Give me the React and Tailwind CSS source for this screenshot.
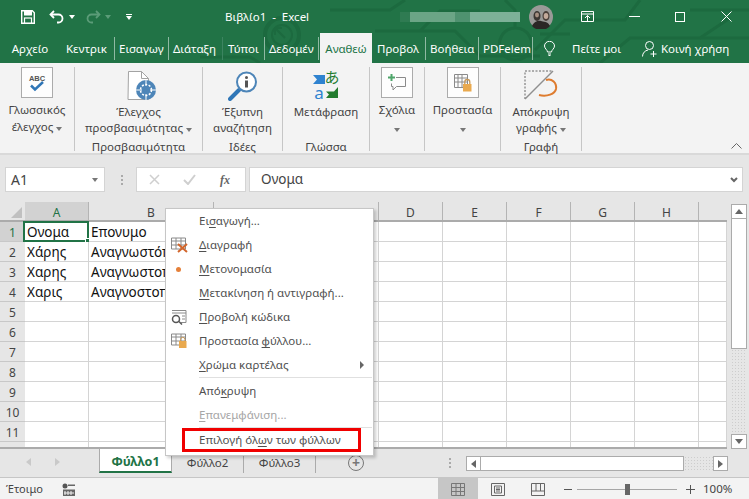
import React from 'react';

// underlined access key in the menu labels
const U = ({ children }) => <span className="underline underline-offset-2 decoration-1">{children}</span>;

const Caret = ({ className = 'border-t-[#777]' }) => (
  <span className={`inline-block w-0 h-0 border-x-[3.5px] border-x-transparent border-t-[4px] ${className}`} />
);

// title bar + tabs background
const CircuitBg = () => (
  <svg className="absolute inset-0" width="749" height="63" viewBox="0 0 749 63" fill="none" stroke="#1c6a3f" strokeWidth="3">
    <circle cx="282" cy="35" r="17" strokeWidth="4" />
    <circle cx="282" cy="35" r="10" strokeWidth="2" />
    <path d="M275 28l10 10M275 28h7M275 28v7" strokeWidth="2" />
    <path d="M330 10h60l15 -10M200 57h50l10 6" />
    <path d="M375 31h80l25 25h60M420 31l20 -20h40" />
    <path d="M505 0l10 10v18a16 16 0 1 0 1 0" />
    <path d="M535 50l30 -30h60l15 -20M600 63l30 -25h70l30 -20" />
    <path d="M540 34h30M690 10h59M700 38h49" />
  </svg>
);

const TitleBar = () => (
  <div className="relative z-10 flex items-center h-[33px] text-white">
    {/* save */}
    <svg className="ml-[21px]" width="14" height="14" viewBox="0 0 14 14">
      <path d="M0.7 0.7h10.6l2 2v10.6H0.7z" fill="none" stroke="#fff" strokeWidth="1.4" />
      <rect x="3" y="1" width="8" height="4.5" fill="#fff" />
      <rect x="3.5" y="8" width="7" height="5.5" fill="none" stroke="#fff" strokeWidth="1.2" />
    </svg>
    {/* undo */}
    <svg className="ml-[14px]" width="16" height="14" viewBox="0 0 16 14" fill="none" stroke="#fff" strokeWidth="1.8">
      <path d="M5 1L1.5 4.5 5 8" />
      <path d="M2 4.5h7.5a4 4 0 0 1 4 4v0a4 4 0 0 1 -4 4H8" />
    </svg>
    <Caret className="ml-[4px] border-t-white" />
    {/* redo */}
    <svg className="ml-[10px]" width="16" height="14" viewBox="0 0 16 14" fill="none" stroke="#5b9c78" strokeWidth="1.8">
      <path d="M11 1l3.5 3.5L11 8" />
      <path d="M14 4.5H6.5a4 4 0 0 0 -4 4v0a4 4 0 0 0 4 4H8" />
    </svg>
    <Caret className="ml-[4px] border-t-[#5b9c78]" />
    <div className="ml-[15px] flex flex-col items-center gap-[1px]">
      <span className="w-[6px] h-[1px] bg-white" />
      <Caret className="border-t-white" />
    </div>
    <span className="ml-[93px] w-[82px] shrink-0 text-[11.5px] whitespace-pre">Βιβλίο1  -  Excel</span>
    {/* blurred account name */}
    <div className="ml-[93px] w-[120px] h-[10px] flex shrink-0">
      <div className="w-[10px] bg-[#2f7b52]" />
      <div className="w-[45px] bg-[#6ba586]" />
      <div className="w-[15px] bg-[#4f9270]" />
      <div className="w-[50px] bg-[#7db198]" />
    </div>
    {/* avatar */}
    <svg className="ml-[9px]" width="24" height="24" viewBox="0 0 24 24">
      <circle cx="12" cy="12" r="12" fill="#9a9a98" />
      <ellipse cx="8" cy="11" rx="3.5" ry="5" fill="#3b3532" />
      <ellipse cx="17" cy="11" rx="3.5" ry="5" fill="#4a403a" />
      <ellipse cx="17" cy="11" rx="2.3" ry="3" fill="#c3aa9b" />
      <ellipse cx="8" cy="10" rx="2" ry="2.4" fill="#a68f82" />
      <path d="M3 21c2-5 7-6 9-5s7 0 9 5a12 12 0 0 1-18 0z" fill="#2b2726" />
    </svg>
    {/* ribbon display */}
    <svg className="ml-[28px]" width="13" height="11" viewBox="0 0 13 11" fill="none" stroke="#fff">
      <path d="M0.5 0.5h12v10h-12zM0.5 3h12M4 7l2.5-2.5L9 7M6.5 4.5V10" />
    </svg>
    <span className="ml-[35px] w-[11px] h-[1px] bg-white" />
    <span className="ml-[35px] w-[10px] h-[10px] border border-white" />
    <svg className="ml-[36px]" width="11" height="11" viewBox="0 0 11 11" stroke="#fff">
      <path d="M0.5 0.5l10 10M10.5 0.5l-10 10" />
    </svg>
  </div>
);

const TabStrip = () => (
  <div className="relative z-10 flex items-center h-[30px] pt-px text-[11.5px]">
    <div className="w-[60px] text-white text-center">Αρχείο</div>
    <div className="ml-[6px] w-[45px] whitespace-nowrap text-white">Κεντρικ</div>
    <span className="ml-[3px] w-px h-[23px] bg-[#8fb9a3]" />
    <div className="ml-[4px] w-[46px] whitespace-nowrap text-white">Εισαγωγ</div>
    <span className="ml-[3px] w-px h-[23px] bg-[#8fb9a3]" />
    <div className="ml-[4px] w-[45px] whitespace-nowrap text-white">Διάταξη</div>
    <span className="ml-[4px] w-px h-[23px] bg-[#3c8460]" />
    <div className="ml-[5px] w-[32px] whitespace-nowrap text-white">Τύποι</div>
    <span className="ml-[4px] w-px h-[23px] bg-[#8fb9a3]" />
    <div className="ml-[4px] w-[46px] whitespace-nowrap text-white">Δεδομέν</div>
    <span className="ml-[3px] w-px h-[23px] bg-[#8fb9a3]" />
    <div className="ml-[1px] -mt-px self-start w-[52px] h-[30px] bg-[#f3f3f3] text-[#217346] flex items-center justify-center pt-px whitespace-nowrap">Αναθεώ</div>
    <div className="ml-[5px] w-[44px] whitespace-nowrap text-white">Προβολ</div>
    <span className="ml-[4px] w-px h-[23px] bg-[#8fb9a3]" />
    <div className="ml-[4px] w-[44px] whitespace-nowrap text-white">Βοήθεια</div>
    <span className="ml-[4px] w-px h-[23px] bg-[#8fb9a3]" />
    <div className="ml-[4px] w-[45px] whitespace-nowrap text-white">PDFelem</div>
    <span className="ml-[4px] w-px h-[23px] bg-[#8fb9a3]" />
    <svg className="ml-[11px]" width="11" height="15" viewBox="0 0 11 15" fill="none" stroke="#fff">
      <path d="M3.5 11c0-2-3-3.5-3-6a5 4.7 0 0 1 10 0c0 2.5-3 4-3 6zM4 13h3M4.5 14.5h2" />
    </svg>
    <div className="ml-[17px] w-[50px] whitespace-nowrap text-white">Πείτε μοι</div>
    <svg className="ml-[20px]" width="16" height="16" viewBox="0 0 16 16" fill="none" stroke="#fff">
      <circle cx="7.5" cy="4.5" r="4" />
      <path d="M0.5 15.5c0-3.5 2.5-6 5.5-6.5M11.5 10v6M8.5 13h6" />
    </svg>
    <div className="ml-[3px] whitespace-nowrap text-white">Κοινή χρήση</div>
  </div>
);

const Group = ({ w, label, children }) => (
  <div className={`${w} relative h-[84px] mt-[4px] border-r border-[#c6c6c6] flex flex-col items-center shrink-0`}>
    {children}
    {label && <div className="absolute left-0 right-0 top-[72px] text-center text-[11.5px] leading-[16px] text-[#444] whitespace-nowrap">{label}</div>}
  </div>
);

const IconBox = ({ children }) => (
  <div className="w-[32px] h-[31px] bg-[#fdfdfd] border border-[#ababab] flex items-center justify-center">{children}</div>
);

const Label = ({ children, mt = '' }) => (
  <div className={`${mt} text-[11.5px] leading-[16px] text-[#444] text-center whitespace-nowrap`}>{children}</div>
);

const Ribbon = () => (
  <div className="h-[92px] bg-[#f3f3f3] border-b-2 border-[#d9d9d9] flex">
    <Group w="w-[75px]">
      <IconBox>
        <svg width="22" height="22" viewBox="0 0 22 22">
          <text x="11" y="9" textAnchor="middle" fontSize="7.5" fontWeight="700" fill="#555" fontFamily="Liberation Sans">ABC</text>
          <path d="M5 13.5l4 4 8-7.5" fill="none" stroke="#2f76b7" strokeWidth="2.5" />
        </svg>
      </IconBox>
      <Label mt="mt-[4px]">Γλωσσικός</Label>
      <Label mt="mt-[1px]">έλεγχος <Caret /></Label>
    </Group>
    <Group w="w-[128px]" label="Προσβασιμότητα">
      <svg className="mt-[4px] ml-[6px]" width="30" height="30" viewBox="0 0 30 30">
        <path d="M1.5 0.5h13l7 7v21h-20.5z" fill="#fff" stroke="#a3a3a3" />
        <path d="M14.5 0.5v7h7" fill="none" stroke="#a3a3a3" />
        <circle cx="19" cy="19" r="10" fill="#4d85b8" />
        <circle cx="19" cy="19" r="5.5" fill="none" stroke="#fff" strokeWidth="1.5" strokeDasharray="2 1.5" />
        <path d="M19 9v6M19 23v6M9 19h6M23 19h6" stroke="#fff" />
      </svg>
      <Label mt="mt-[3px]">Έλεγχος</Label>
      <Label>προσβασιμότητας <Caret /></Label>
    </Group>
    <Group w="w-[80px]" label="Ιδέες">
      <svg className="mt-[4px]" width="30" height="30" viewBox="0 0 30 30">
        <path d="M11 19L2 28" stroke="#2f76b7" strokeWidth="4" strokeLinecap="round" />
        <circle cx="18.5" cy="11" r="9.5" fill="#fff" stroke="#4d85b8" strokeWidth="2" />
        <circle cx="18.5" cy="6.5" r="1.5" fill="#555" />
        <rect x="17" y="9.5" width="3" height="7" fill="#555" />
      </svg>
      <Label mt="mt-[3px]">Έξυπνη</Label>
      <Label>αναζήτηση</Label>
    </Group>
    <Group w="w-[87px]" label="Γλώσσα">
      <svg className="mt-[3px]" width="29" height="30" viewBox="0 0 29 30">
        <path d="M1 5h12v9H1l4-4.5z" fill="#2f83d0" />
        <text x="20" y="13" textAnchor="middle" fontSize="15" fill="#237c2f" fontFamily="Noto Sans CJK JP">あ</text>
        <text x="7" y="29" textAnchor="middle" fontSize="17" fill="#2f83d0" fontFamily="Noto Sans">a</text>
        <path d="M14 28h12V17l-4 4.5h-8l3 3z" fill="#237c2f" />
      </svg>
      <Label mt="mt-[4px]">Μετάφραση</Label>
    </Group>
    <Group w="w-[55px]">
      <IconBox>
        <svg width="20" height="20" viewBox="0 0 20 20" fill="none">
          <path d="M9 4.5h9.5v9h-9l-3.5 3.5v-3.5h-1.5v-3" stroke="#8a8a8a" />
          <path d="M4.5 1v7M1 4.5h7" stroke="#4ea56a" strokeWidth="2" />
        </svg>
      </IconBox>
      <Label mt="mt-[4px]">Σχόλια</Label>
      <div className="mt-[2px] leading-[12px]"><Caret /></div>
    </Group>
    <Group w="w-[76px]">
      <IconBox>
        <svg width="20" height="20" viewBox="0 0 20 20" fill="none">
          <path d="M1.5 1.5h13v13h-13zM1.5 5h13M1.5 9h13M5 1.5v13M9 1.5v13" stroke="#8a8a8a" />
          <rect x="10" y="11" width="8.5" height="7.5" fill="#e9a94e" />
          <path d="M11.8 11V9a2.5 2.5 0 0 1 5 0v2" stroke="#c79a5a" strokeWidth="1.3" />
        </svg>
      </IconBox>
      <Label mt="mt-[4px]">Προστασία</Label>
      <div className="mt-[2px] leading-[12px]"><Caret /></div>
    </Group>
    <Group w="w-[81px]" label="Γραφή">
      <svg className="mt-[3px]" width="34" height="30" viewBox="0 0 34 30" fill="none">
        <path d="M1 29V1h27" stroke="#666" strokeDasharray="2 1.5" />
        <path d="M1 29L29 1" stroke="#8f8f8f" strokeWidth="1.5" />
        <path d="M22 10c6-2 11 3 10 9-1 5-9 8-17 6" stroke="#de7c2f" strokeWidth="2" />
      </svg>
      <Label mt="mt-[4px]">Απόκρυψη</Label>
      <Label>γραφής <Caret /></Label>
    </Group>
    <div className="flex-1 flex justify-end items-end pr-[7px] pb-[4px]">
      <svg width="11" height="6" viewBox="0 0 11 6" fill="none" stroke="#666"><path d="M0.5 5.5l5-5 5 5" /></svg>
    </div>
  </div>
);

const FormulaBar = () => (
  <div className="h-[47px] flex items-start bg-[#e6e6e6] pt-[12px]">
    <div className="ml-[5px] w-[100px] h-[25px] bg-white border border-[#d4d4d4] flex items-center justify-between pl-[5px] pr-[6px] text-[14px] text-[#444]">
      <span>A1</span>
      <Caret className="border-t-[#777]" />
    </div>
    <div className="ml-[15px] w-[3px] h-[25px] flex flex-col justify-center gap-[2px] items-center">
      <span className="w-[2px] h-[2px] bg-[#aaa]" />
      <span className="w-[2px] h-[2px] bg-[#aaa]" />
      <span className="w-[2px] h-[2px] bg-[#aaa]" />
    </div>
    <div className="ml-[13px] w-[110px] h-[25px] bg-white border border-[#d4d4d4] flex items-center">
      <svg className="ml-[12px]" width="11" height="11" viewBox="0 0 11 11" stroke="#cfcfcf" strokeWidth="1.5"><path d="M1 1l9 9M10 1l-9 9" /></svg>
      <svg className="ml-[23px]" width="13" height="11" viewBox="0 0 13 11" fill="none" stroke="#cfcfcf" strokeWidth="2"><path d="M1 6l4 4 7-9" /></svg>
      <span className="ml-[24px] text-[12px] italic font-bold text-[#666] font-['Liberation_Serif',serif]">fx</span>
    </div>
    <div className="ml-[3px] w-[494px] h-[25px] bg-white border border-[#d4d4d4] flex items-center justify-between pl-[11px] pr-[4px]">
      <span className="text-[13.5px] text-[#444]">Ονομα</span>
      <svg width="8" height="6" viewBox="0 0 8 6" fill="none" stroke="#666" strokeWidth="2"><path d="M1 1l3 3 3-3" /></svg>
    </div>
  </div>
);

const COLS = [
  { name: 'A', w: 'w-[64px]' },
  { name: 'B', w: 'w-[125px]' },
  { name: 'C', w: 'w-[165px]' },
  { name: 'D', w: 'w-[64px]' },
  { name: 'E', w: 'w-[64px]' },
  { name: 'F', w: 'w-[64px]' },
  { name: 'G', w: 'w-[64px]' },
  { name: 'H', w: 'w-[64px]' },
  { name: '', w: 'w-[28px]' },
];

const DATA = [
  ['Ονομα', 'Επονυμο'],
  ['Χάρης', 'Αναγνωστόπουλος'],
  ['Χαρης', 'Αναγνωστοπουλος'],
  ['Χαρις', 'Αναγνοστοπουλος'],
];

const ROWS = [1, 2, 3, 4, 5, 6, 7, 8, 9, 10, 11, 12];

const Sheet = () => (
  <div className="flex h-[247px] bg-[#e6e6e6]">
    <div className="w-[727px] shrink-0 overflow-hidden border-b-2 border-[#ababab]">
      {/* column headers */}
      <div className="flex h-[20px] border-b-2 border-[#ababab]">
        <div className="w-[25px] shrink-0 flex items-end justify-end pr-[3px] pb-[2px]">
          <span className="w-0 h-0 border-l-[11px] border-l-transparent border-b-[11px] border-b-[#c0c0c0]" />
        </div>
        {COLS.map((c, i) => (
          <div key={i} className={`${c.w} shrink-0 text-center text-[12px] leading-[21px] text-[#444] border-r border-[#b4b4b4] ${i === 0 ? 'bg-[#d2d2d2] text-[#217346]' : ''} ${i === 8 ? 'border-r-0' : ''}`}>{c.name}</div>
        ))}
      </div>
      {ROWS.map((r) => (
        <div key={r} className="flex h-[20px]">
          <div className={`w-[25px] shrink-0 text-center text-[12px] leading-[21px] border-b border-[#c8c8c8] ${r === 1 ? 'bg-[#d2d2d2] text-[#217346]' : 'text-[#444]'}`}>{r}</div>
          {COLS.map((c, i) => (
            <div key={i} className={`${c.w} shrink-0 relative bg-white border-r border-b border-[#d4d4d4] text-[13.5px] leading-[21px] text-[#111] pl-[2px] whitespace-nowrap ${i === 1 ? 'overflow-hidden' : ''}`}>
              {DATA[r - 1] && DATA[r - 1][i]}
              {r === 1 && i === 0 && (
                <div className="absolute -top-px -left-[2px] w-[66px] h-[21px] border-2 border-[#217346]">
                  <span className="absolute -right-[3px] -bottom-[3px] w-[5px] h-[5px] bg-[#217346] border border-white" />
                </div>
              )}
            </div>
          ))}
        </div>
      ))}
    </div>
    {/* vertical scrollbar */}
    <div className="ml-[4px] mt-[2px] w-[16px] flex flex-col">
      <div className="h-[15px] bg-white border border-[#ababab] flex items-center justify-center"><span className="w-0 h-0 border-x-[4px] border-x-transparent border-b-[5px] border-b-[#666]" /></div>
      <div className="h-[130px] bg-white border-x border-b border-[#ababab]" />
      <div className="flex-1 bg-[radial-gradient(#cdcdcd_1px,#e6e6e6_1px)] bg-[length:3px_3px]" />
      <div className="h-[15px] bg-white border border-[#ababab] flex items-center justify-center"><span className="w-0 h-0 border-x-[4px] border-x-transparent border-t-[5px] border-t-[#666]" /></div>
    </div>
  </div>
);

const SheetTab = ({ label }) => (
  <div className="w-[72px] h-[17px] border-r border-[#ababab] text-center text-[11.5px] leading-[13px] text-[#444]">{label}</div>
);

const TabsBar = () => (
  <div className="h-[29px] flex bg-[#e6e6e6] border-b border-[#c6c6c6]">
    <div className="w-[99px] flex items-center gap-[24px] pb-[2px] pl-[26px]">
      <span className="w-0 h-0 border-y-[4px] border-y-transparent border-r-[5px] border-r-[#c9c9c9]" />
      <span className="w-0 h-0 border-y-[4px] border-y-transparent border-l-[5px] border-l-[#c9c9c9]" />
    </div>
    <div className="w-[73px] h-[24px] bg-white border-l border-r border-[#ababab] border-b-2 border-b-[#217346] text-center text-[12.5px] font-bold leading-[26px] text-[#217346]">Φύλλο1</div>
    <div className="flex pt-[7px]">
      <SheetTab label="Φύλλο2" />
      <SheetTab label="Φύλλο3" />
    </div>
    <div className="ml-[32px] mt-[6px] w-[16px] h-[16px] rounded-full border border-[#777] flex items-center justify-center text-[#777] text-[14px] leading-none font-bold">+</div>
    <div className="ml-[85px] mt-[9px] flex flex-col gap-[2px]">
      <span className="w-[2px] h-[2px] bg-[#aaa]" />
      <span className="w-[2px] h-[2px] bg-[#aaa]" />
      <span className="w-[2px] h-[2px] bg-[#aaa]" />
    </div>
    {/* horizontal scrollbar */}
    <div className="ml-[15px] mt-[7px] flex h-[15px]">
      <div className="w-[15px] bg-white border border-[#ababab] flex items-center justify-center"><span className="w-0 h-0 border-y-[4px] border-y-transparent border-r-[5px] border-r-[#666]" /></div>
      <div className="w-[203px] bg-white border-y border-r border-[#ababab]" />
      <div className="w-[29px] bg-[radial-gradient(#cdcdcd_1px,#e6e6e6_1px)] bg-[length:3px_3px]" />
      <div className="w-[15px] bg-white border border-[#ababab] flex items-center justify-center"><span className="w-0 h-0 border-y-[4px] border-y-transparent border-l-[5px] border-l-[#666]" /></div>
    </div>
  </div>
);

const StatusBar = () => (
  <div className="h-[22px] bg-[#f3f3f3] flex items-center text-[11px] text-[#444]">
    <span className="ml-[6px] w-[56px] shrink-0">Έτοιμο</span>
    <svg width="13" height="13" viewBox="0 0 13 13">
      <circle cx="3" cy="3" r="2.5" fill="#555" />
      <path d="M6 1.5h7V3H6zM1 6.5h12V13H1z" fill="#666" />
      <path d="M3 8v4M6 8v4M9 8v4M2 10h10" stroke="#f3f3f3" />
    </svg>
    <div className="ml-[363px] w-[40px] h-[22px] bg-[#c6c6c6] flex items-center justify-center">
      <svg width="14" height="13" viewBox="0 0 14 13" fill="none" stroke="#777"><path d="M0.5 0.5h13v12h-13zM0.5 4.5h13M0.5 8.5h13M5 0.5v12M9.5 0.5v12" /></svg>
    </div>
    <svg className="ml-[13px]" width="14" height="13" viewBox="0 0 14 13" fill="none" stroke="#666"><path d="M0.5 0.5h13v12h-13zM3.5 3h7v7h-7zM5 5h4M5 6.5h4M5 8h4" /></svg>
    <svg className="ml-[26px]" width="14" height="13" viewBox="0 0 14 13" fill="none" stroke="#666"><path d="M0.5 0.5h13v12h-13zM0.5 8h13M5 0.5V8M9.5 0.5V8" /></svg>
    <span className="ml-[19px] w-[8px] h-[1px] bg-[#555]" />
    <div className="ml-[5px] relative w-[100px] h-[1px] bg-[#a6a6a6]">
      <span className="absolute left-[48px] -top-[5px] w-[5px] h-[11px] bg-[#666]" />
    </div>
    <span className="ml-[9px] relative w-[9px] h-[9px]">
      <span className="absolute left-0 top-[4px] w-[9px] h-[1px] bg-[#555]" />
      <span className="absolute left-[4px] top-0 w-[1px] h-[9px] bg-[#555]" />
    </span>
    <span className="ml-[8px] text-[11.5px]">100%</span>
  </div>
);

const MenuItem = ({ icon, children, arrow, disabled }) => (
  <div className={`h-[24px] flex items-center text-[11.5px] ${disabled ? 'text-[#a6a6a6]' : 'text-[#505050]'}`}>
    <div className="w-[33px] shrink-0 flex items-center pl-[5px]">{icon}</div>
    <span className="whitespace-nowrap flex-1">{children}</span>
    {arrow && <span className="mr-[9px] w-0 h-0 border-y-[4px] border-y-transparent border-l-[4px] border-l-[#666]" />}
  </div>
);

const SmallGrid = () => <path d="M0.5 1h14v11h-14zM0.5 4h14M0.5 8h14M5 1v11M10 1v11" stroke="#8a8a8a" fill="none" />;

// sheet tab right-click menu
const ContextMenu = () => (
  <div className="absolute left-[165px] top-[208px] w-[209px] h-[248px] bg-white border border-[#c6c6c6] shadow-[2px_2px_3px_rgba(0,0,0,0.2)] z-20">
    <MenuItem><>Ει<U>σ</U>αγωγή...</></MenuItem>
    <MenuItem icon={
      <svg width="18" height="16" viewBox="0 0 18 16"><SmallGrid /><path d="M7 7l9 8M16 7l-9 8" stroke="#d2662c" strokeWidth="2" /></svg>
    }><><U>Δ</U>ιαγραφή</></MenuItem>
    <MenuItem icon={<span className="ml-[5px] w-[5px] h-[5px] rounded-full bg-[#e5803a]" />}><><U>Μ</U>ετονομασία</></MenuItem>
    <MenuItem><><U>Μ</U>ετακίνηση ή αντιγραφή...</></MenuItem>
    <MenuItem icon={
      <svg width="16" height="15" viewBox="0 0 16 15" fill="none"><path d="M1 0.5h14v12h-5M1 3h14M11 6h3M11 9h3" stroke="#8a8a8a" /><circle cx="5" cy="9" r="3.5" stroke="#555" strokeWidth="1.5" /><path d="M8 11.5l3 3" stroke="#555" strokeWidth="1.5" /></svg>
    }><><U>Π</U>ροβολή κώδικα</></MenuItem>
    <MenuItem icon={
      <svg width="16" height="16" viewBox="0 0 16 16" fill="none"><SmallGrid /><rect x="8" y="8" width="7.5" height="7" fill="#e9a94e" /><path d="M9.5 8V6.5a2.2 2.2 0 0 1 4.4 0V8" stroke="#c79a5a" /></svg>
    }><>Προστασία <U>φ</U>ύλλου...</></MenuItem>
    <MenuItem arrow><><U>Χ</U>ρώμα καρτέλας</></MenuItem>
    <div className="ml-[33px] mr-[1px] mb-[1px] h-px bg-[#e0e0e0]" />
    <MenuItem><>Από<U>κ</U>ρυψη</></MenuItem>
    <MenuItem disabled><><U>Ε</U>πανεμφάνιση...</></MenuItem>
    <div className="ml-[33px] mr-[1px] h-px bg-[#e0e0e0]" />
    <MenuItem><>Επιλογή όλ<U>ω</U>ν των φύλλων</></MenuItem>
  </div>
);

export default function App() {
  return (
    <div className="relative w-[749px] h-[499px] overflow-hidden bg-[#e6e6e6] font-['Noto_Sans',sans-serif]">
      <div className="relative h-[63px] bg-[#217346] overflow-hidden">
        <CircuitBg />
        <TitleBar />
        <TabStrip />
      </div>
      <Ribbon />
      <FormulaBar />
      <Sheet />
      <TabsBar />
      <StatusBar />
      <ContextMenu />
      {/* red highlight drawn over the screenshot */}
      <div className="absolute left-[182px] top-[428px] w-[179px] h-[24px] border-[3px] border-[#f00000] z-30" />
    </div>
  );
}
